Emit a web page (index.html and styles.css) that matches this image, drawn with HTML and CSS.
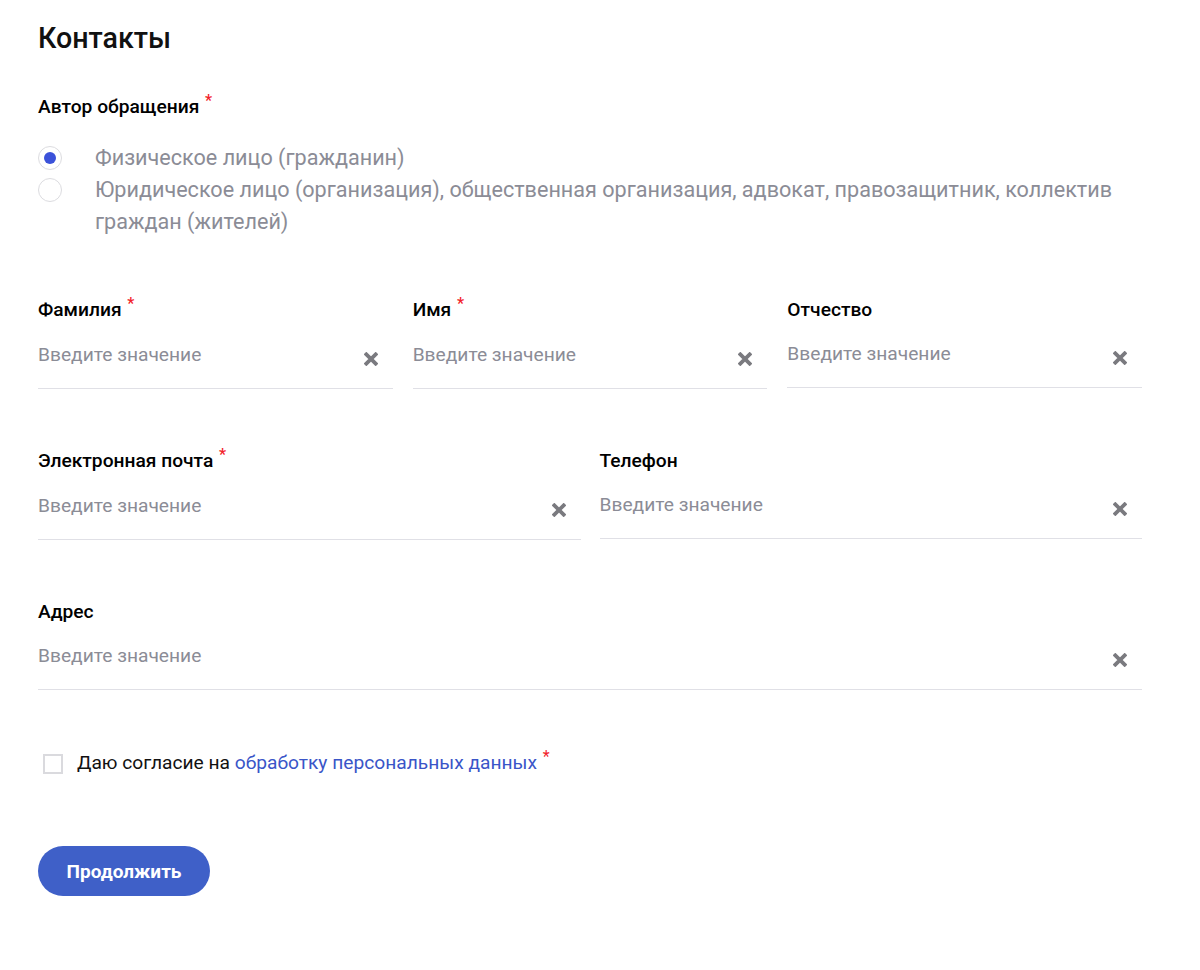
FILE: index.html
```html
<!DOCTYPE html>
<html lang="ru">
<head>
<meta charset="utf-8">
<title>Контакты</title>
<link rel="stylesheet" href="styles.css">
</head>
<body>
<main class="page">
  <h1 class="title">Контакты</h1>

  <section class="author">
    <div class="label">Автор обращения <span class="req">*</span></div>
    <div class="radios">
      <label class="radio">
        <span class="radio-circle checked"><span class="radio-dot"></span></span>
        <span class="radio-text">Физическое лицо (гражданин)</span>
      </label>
      <label class="radio">
        <span class="radio-circle"></span>
        <span class="radio-text">Юридическое лицо (организация), общественная организация, адвокат, правозащитник, коллектив граждан (жителей)</span>
      </label>
    </div>
  </section>

  <div class="row row-3">
    <div class="field">
      <div class="label">Фамилия <span class="req">*</span></div>
      <div class="input"><span class="ph">Введите значение</span><svg class="clear" viewBox="0 0 12 12"><path d="M2 2L10 10M10 2L2 10"/></svg></div>
    </div>
    <div class="field">
      <div class="label">Имя <span class="req">*</span></div>
      <div class="input"><span class="ph">Введите значение</span><svg class="clear" viewBox="0 0 12 12"><path d="M2 2L10 10M10 2L2 10"/></svg></div>
    </div>
    <div class="field">
      <div class="label">Отчество</div>
      <div class="input"><span class="ph">Введите значение</span><svg class="clear" viewBox="0 0 12 12"><path d="M2 2L10 10M10 2L2 10"/></svg></div>
    </div>
  </div>

  <div class="row row-2">
    <div class="field">
      <div class="label">Электронная почта <span class="req">*</span></div>
      <div class="input"><span class="ph">Введите значение</span><svg class="clear" viewBox="0 0 12 12"><path d="M2 2L10 10M10 2L2 10"/></svg></div>
    </div>
    <div class="field">
      <div class="label">Телефон</div>
      <div class="input"><span class="ph">Введите значение</span><svg class="clear" viewBox="0 0 12 12"><path d="M2 2L10 10M10 2L2 10"/></svg></div>
    </div>
  </div>

  <div class="row row-1">
    <div class="field">
      <div class="label">Адрес</div>
      <div class="input"><span class="ph">Введите значение</span><svg class="clear" viewBox="0 0 12 12"><path d="M2 2L10 10M10 2L2 10"/></svg></div>
    </div>
  </div>

  <label class="consent">
    <span class="checkbox"></span>
    <span class="consent-text">Даю согласие на <a class="link" href="#">обработку персональных данных</a> <span class="req">*</span></span>
  </label>

  <button class="btn" type="button">Продолжить</button>
</main>
</body>
</html>
```
FILE: styles.css
```css
* { box-sizing: border-box; }
html, body { margin: 0; padding: 0; background: #fff; }
body {
  font-family: Roboto, "Liberation Sans", Arial, sans-serif;
  color: #000;
}
.page {
  padding: 20px 58px 40px 38px;
}
.title {
  margin: 0;
  font-size: 28.6px;
  font-weight: 500;
  line-height: 36px;
  color: #111;
}
.author { margin-top: 39px; }
.label {
  font-size: 19.2px;
  font-weight: 500;
  line-height: 24px;
  color: #000;
}
.req {
  color: #f2222a;
  font-size: 16px;
  position: relative;
  top: -7px;
  margin-left: 1px;
}
.radios {
  margin-top: 22px;
  display: flex;
  flex-direction: column;
}
.radio {
  display: flex;
  align-items: flex-start;
  gap: 33px;
}
.radio-circle {
  flex: 0 0 24px;
  width: 24px;
  height: 24px;
  border: 1px solid #dcdce0;
  border-radius: 50%;
  margin-top: 4px;
  display: flex;
  align-items: center;
  justify-content: center;
}
.radio-dot {
  width: 12px;
  height: 12px;
  border-radius: 50%;
  background: #3b52d9;
}
.radio-text {
  font-size: 21.6px;
  line-height: 32px;
  color: #8b8c96;
}
.row {
  display: grid;
  gap: 20px;
}
.row-3 { grid-template-columns: repeat(3, 1fr); margin-top: 60px; }
.row-2 { grid-template-columns: repeat(2, 1fr); gap: 19px; margin-top: 60px; }
.row-1 { grid-template-columns: 1fr; margin-top: 60px; }
.field { display: flex; flex-direction: column; }
.input {
  margin-top: 20px;
  height: 46px;
  border-bottom: 1px solid #e0e0e6;
  display: flex;
  align-items: flex-start;
  justify-content: space-between;
  padding-right: 15px;
}
.ph {
  font-size: 19.2px;
  line-height: 24px;
  color: #8b8c96;
}
.clear {
  width: 14px;
  height: 14px;
  margin-top: 9px;
  fill: none;
  stroke: #7a7a7f;
  stroke-width: 3.2;
  stroke-linecap: square;
}
.consent {
  display: flex;
  align-items: center;
  margin-top: 61px;
  padding-left: 5px;
}
.checkbox {
  width: 20px;
  height: 20px;
  border: 2px solid #dadade;
  margin-right: 14px;
}
.consent-text {
  font-size: 19.2px;
  line-height: 24px;
  color: #111;
}
.link {
  color: #3a55c8;
  text-decoration: none;
}
.btn {
  display: block;
  margin-top: 70px;
  width: 172px;
  height: 50px;
  border: none;
  border-radius: 25px;
  background: #3f60c8;
  color: #fff;
  font-family: Roboto, "Liberation Sans", Arial, sans-serif;
  font-size: 19px;
  font-weight: 700;
  cursor: pointer;
}
```
